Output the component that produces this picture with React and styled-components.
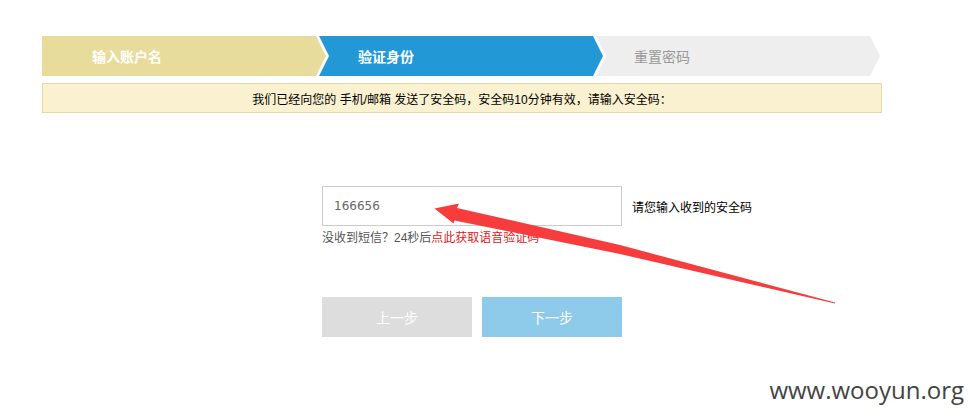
import React, { useState } from "react";
import styled, { createGlobalStyle } from "styled-components";

const GlobalStyle = createGlobalStyle`
  * {
    margin: 0;
    padding: 0;
    box-sizing: border-box;
  }

  html, body {
    width: 100%;
    height: 100%;
    background: #ffffff;
    overflow: hidden;
  }

  body {
    font-family: "Liberation Sans", "Noto Sans CJK SC", sans-serif;
    font-size: 12px;
    color: #000;
  }
`;

const Page = styled.div`
  position: relative;
  width: 974px;
  height: 420px;
  padding: 36px 0 0 42px;
`;

const Wrap = styled.div`
  width: 840px;
`;

const Steps = styled.div`
  display: flex;
  height: 40px;
`;

const Step = styled.div`
  width: 284px;
  height: 40px;
  display: flex;
  align-items: center;
  padding-left: ${(p) => p.$pad}px;
  margin-left: ${(p) => (p.$first ? 0 : -7)}px;
  background: ${(p) => p.$bg};
  color: ${(p) => p.$color};
  font-size: 14px;
  font-weight: ${(p) => (p.$bold ? 700 : 400)};
  clip-path: ${(p) =>
    p.$first
      ? "polygon(0 0, calc(100% - 10px) 0, 100% 50%, calc(100% - 10px) 100%, 0 100%)"
      : "polygon(0 0, calc(100% - 10px) 0, 100% 50%, calc(100% - 10px) 100%, 0 100%, 10px 50%)"};
`;

const Notice = styled.div`
  margin-top: 7px;
  height: 30px;
  border: 1px solid #e3d9a6;
  background: #faf1d0;
  display: flex;
  align-items: center;
  justify-content: center;
  font-size: 12px;
  color: #000;
`;

const Form = styled.div`
  margin: 73px 0 0 280px;
`;

const InputRow = styled.div`
  display: flex;
  align-items: center;
  gap: 10px;
`;

const CodeInput = styled.input`
  width: 300px;
  height: 40px;
  border: 1px solid #cccccc;
  padding-left: 11px;
  font-family: "DejaVu Sans", "Liberation Sans", sans-serif;
  font-size: 12px;
  color: #666;
  outline: none;
`;

const Hint = styled.span`
  font-size: 12px;
  color: #000;
`;

const Resend = styled.div`
  margin-top: 4px;
  font-size: 12px;
  line-height: 16px;
  color: #555;
`;

const RedLink = styled.a`
  color: #e4171c;
  text-decoration: none;
  cursor: pointer;
`;

const Buttons = styled.div`
  display: flex;
  gap: 10px;
  margin-top: 51px;
`;

const Button = styled.button`
  width: ${(p) => p.$w}px;
  height: 40px;
  border: none;
  background: ${(p) => p.$bg};
  color: #fff;
  font-family: "Noto Sans CJK SC", sans-serif;
  font-size: 14px;
  cursor: pointer;
`;

const Annotation = styled.svg`
  position: absolute;
  left: 0;
  top: 0;
  width: 974px;
  height: 420px;
  pointer-events: none;
`;

const Watermark = styled.div`
  position: absolute;
  right: 10px;
  top: 373px;
  font-family: "Open Sans", "Liberation Sans", sans-serif;
  font-size: 24px;
  color: #444;
`;

export default function App() {
  const [code, setCode] = useState("166656");

  return (
    <>
      <GlobalStyle />
      <Page>
        <Wrap>
          <Steps>
            <Step $first $bg="#e8dc9c" $color="#fff" $bold $pad={50}>
              输入账户名
            </Step>
            <Step $bg="#2398d6" $color="#fff" $bold $pad={39}>
              验证身份
            </Step>
            <Step $bg="#eeeeee" $color="#999" $pad={38}>
              重置密码
            </Step>
          </Steps>

          <Notice>我们已经向您的 手机/邮箱 发送了安全码，安全码10分钟有效，请输入安全码：</Notice>

          <Form>
            <InputRow>
              <CodeInput value={code} onChange={(e) => setCode(e.target.value)} />
              <Hint>请您输入收到的安全码</Hint>
            </InputRow>
            <Resend>
              没收到短信？24秒后<RedLink>点此获取语音验证码</RedLink>
            </Resend>
            <Buttons>
              <Button $w={150} $bg="#dddddd">上一步</Button>
              <Button $w={140} $bg="#8ecae9">下一步</Button>
            </Buttons>
          </Form>
        </Wrap>

        {/* red arrow drawn on the screenshot */}
        <Annotation viewBox="0 0 974 420">
          <polygon
            points="434.5,208.5 459,203.5 457,208 620,245 835,302.5 835,303.5 620,254 454.5,220.5 453.5,223.5"
            fill="#f63c3c"
          />
        </Annotation>

        <Watermark>www.wooyun.org</Watermark>
      </Page>
    </>
  );
}
